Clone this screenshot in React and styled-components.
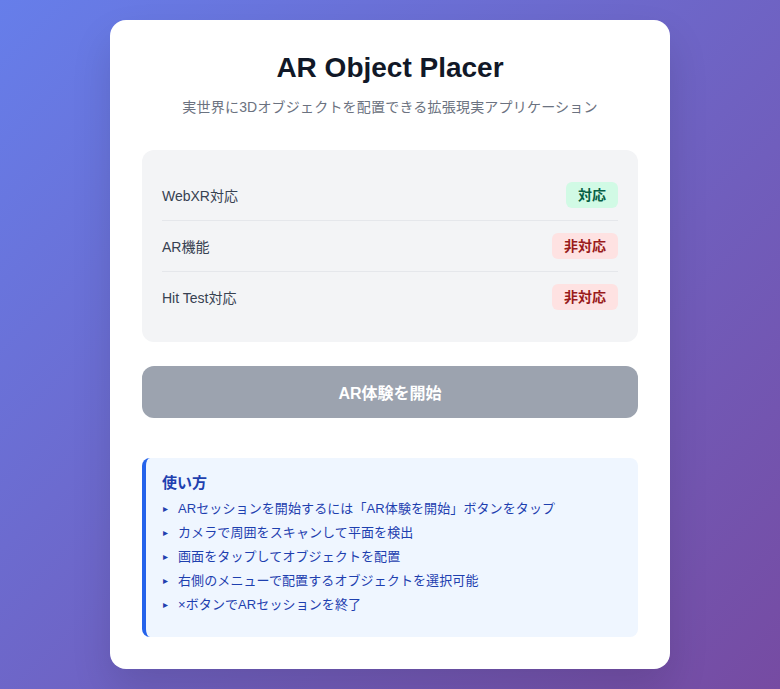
import React from 'react'
import styled, { createGlobalStyle } from 'styled-components'

const GlobalStyle = createGlobalStyle`
  * { box-sizing: border-box; }
  html, body {
    margin: 0;
    padding: 0;
  }
  body {
    font-family: "Liberation Sans", "Noto Sans CJK JP", sans-serif;
    background: linear-gradient(135deg, #667eea 0%, #764ba2 100%);
    min-height: 100vh;
  }
`

const Page = styled.div`
  min-height: 100vh;
  padding: 20px;
  display: flex;
  justify-content: center;
  align-items: flex-start;
`

const Card = styled.div`
  width: 560px;
  background: #ffffff;
  border-radius: 16px;
  padding: 32px;
  box-shadow: 0 20px 40px rgba(0, 0, 0, 0.12);
`

const Header = styled.div`
  text-align: center;
  margin-bottom: 32px;
`

const Title = styled.h1`
  margin: 0;
  font-size: 28px;
  line-height: 32px;
  font-weight: 700;
  color: #111827;
`

const Subtitle = styled.p`
  margin: 13px 0 0;
  font-size: 14px;
  line-height: 21px;
  letter-spacing: 0.2px;
  color: #6b7280;
`

const StatusPanel = styled.div`
  background: #f3f4f6;
  border-radius: 12px;
  padding: 20px;
`

const StatusRow = styled.div`
  display: flex;
  align-items: center;
  justify-content: space-between;
  padding: 12px 0;
  border-bottom: 1px solid #e5e7eb;

  &:last-child {
    border-bottom: none;
  }
`

const Label = styled.span`
  font-size: 14px;
  color: #374151;
`

const Badge = styled.span`
  font-size: 14px;
  line-height: 18px;
  font-weight: 700;
  padding: 4px 12px;
  border-radius: 6px;
  background: ${p => (p.$ok ? '#d1fae5' : '#fee2e2')};
  color: ${p => (p.$ok ? '#065f46' : '#991b1b')};
`

const StartButton = styled.button`
  display: block;
  width: 100%;
  margin: 24px 0 40px;
  height: 52px;
  border: none;
  border-radius: 12px;
  background: #9ca3af;
  color: #ffffff;
  font-family: inherit;
  font-size: 16px;
  font-weight: 700;
  cursor: not-allowed;
`

const Instructions = styled.div`
  background: #eff6ff;
  border-left: 4px solid #2563eb;
  border-radius: 8px;
  padding: 16px 16px 20px;
`

const InstructionsTitle = styled.h3`
  margin: 0;
  font-size: 15px;
  line-height: 18px;
  font-weight: 700;
  color: #1e40af;
`

const List = styled.ul`
  list-style: none;
  margin: 5px 0 0;
  padding: 0;
`

const Item = styled.li`
  position: relative;
  font-size: 13px;
  line-height: 24px;
  letter-spacing: 0.1px;
  color: #1e40af;
  padding-left: 16px;

  &::before {
    content: '▸';
    position: absolute;
    left: 1px;
    top: 0;
    font-size: 10px;
    color: #1e40af;
  }
`

const statuses = [
  { label: 'WebXR対応', ok: true },
  { label: 'AR機能', ok: false },
  { label: 'Hit Test対応', ok: false },
]

const steps = [
  'ARセッションを開始するには「AR体験を開始」ボタンをタップ',
  'カメラで周囲をスキャンして平面を検出',
  '画面をタップしてオブジェクトを配置',
  '右側のメニューで配置するオブジェクトを選択可能',
  '×ボタンでARセッションを終了',
]

export default function App() {
  return (
    <>
      <GlobalStyle />
      <Page>
        <Card>
          <Header>
            <Title>AR Object Placer</Title>
            <Subtitle>実世界に3Dオブジェクトを配置できる拡張現実アプリケーション</Subtitle>
          </Header>

          <StatusPanel>
            {statuses.map(s => (
              <StatusRow key={s.label}>
                <Label>{s.label}</Label>
                <Badge $ok={s.ok}>{s.ok ? '対応' : '非対応'}</Badge>
              </StatusRow>
            ))}
          </StatusPanel>

          <StartButton disabled>AR体験を開始</StartButton>

          <Instructions>
            <InstructionsTitle>使い方</InstructionsTitle>
            <List>
              {steps.map(step => (
                <Item key={step}>{step}</Item>
              ))}
            </List>
          </Instructions>
        </Card>
      </Page>
    </>
  )
}
